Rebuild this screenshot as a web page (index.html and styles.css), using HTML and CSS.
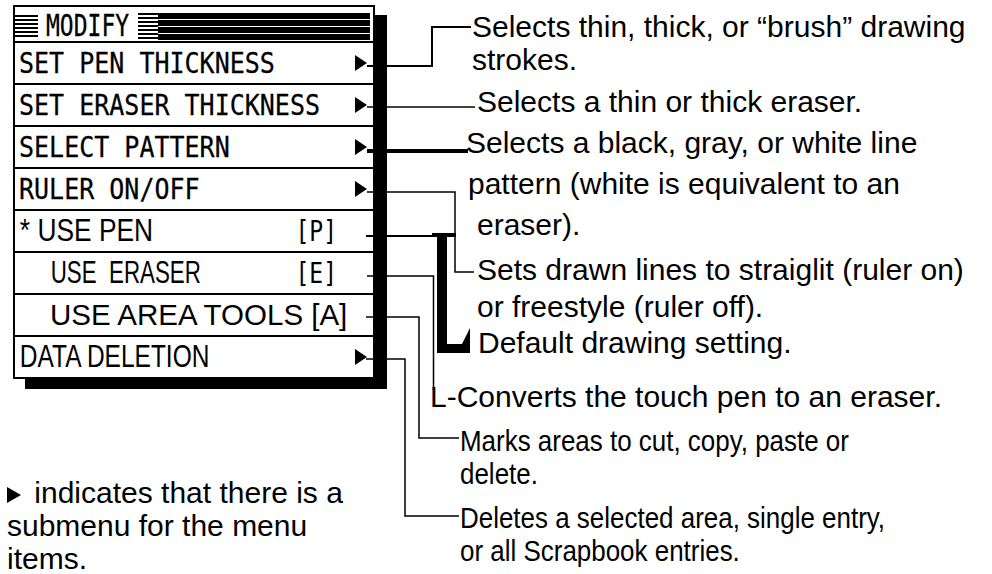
FILE: index.html
```html
<!DOCTYPE html>
<html lang="en">
<head>
<meta charset="UTF-8">
<title>MODIFY menu</title>
<link rel="stylesheet" href="styles.css">
</head>
<body>
<div class="page">
    <div class="left">
        <div class="menu">
            <div class="menu-title">
                <span class="grip"></span>
                <span class="lcd title-text">MODIFY</span>
                <span class="title-bars"></span>
            </div>
            <div class="menu-row"><span class="lcd">SET PEN THICKNESS</span><span class="arrow"></span></div>
            <div class="menu-row"><span class="lcd">SET ERASER THICKNESS</span><span class="arrow"></span></div>
            <div class="menu-row"><span class="lcd">SELECT PATTERN</span><span class="arrow"></span></div>
            <div class="menu-row"><span class="lcd">RULER ON/OFF</span><span class="arrow"></span></div>
            <div class="menu-row"><span class="plain">* USE PEN</span><span class="lcd key">[P]</span></div>
            <div class="menu-row sub"><span class="plain tight">USE&nbsp; ERASER</span><span class="lcd key">[E]</span></div>
            <div class="menu-row sub"><span class="wide">USE AREA TOOLS [A]</span></div>
            <div class="menu-row last"><span class="plain slim">DATA DELETION</span><span class="arrow"></span></div>
        </div>
        <p class="footnote"><span class="arrow inline"></span> indicates that there is a<br>submenu for the menu<br>items.</p>
    </div>

    <div class="notes">
        <p class="note n1">Selects thin, thick, or “brush” drawing<br>strokes.</p>
        <p class="note n2">Selects a thin or thick eraser.</p>
        <p class="note n3">
            <span class="ln">Selects a black, gray, or white line</span>
            <span class="ln l2">pattern (white is equivalent to an</span>
            <span class="ln l3">eraser).</span>
        </p>
        <p class="note n4">Sets drawn lines to straiglit (ruler on)<br>or freestyle (ruler off).</p>
        <p class="note n5">Default drawing setting.</p>
        <p class="note n6">L-Converts the touch pen to an eraser.</p>
        <p class="note n7 narrow">Marks areas to cut, copy, paste or<br>delete.</p>
        <p class="note n8 narrow">Deletes a selected area, single entry,<br>or all Scrapbook entries.</p>
    </div>

    <!-- leader lines from the menu to the notes -->
    <svg class="leaders" width="992" height="574" viewBox="0 0 992 574">
        <g fill="none" stroke="#000" stroke-width="2">
            <path d="M367 66H432V27H471"/>
            <path d="M367 107H475" stroke-width="1.5"/>
            <path d="M367 151H468" stroke-width="4"/>
            <path d="M367 192H455V272H474" stroke-width="1.5"/>
            <path d="M366 236H440" stroke-width="2"/>
            <path d="M367 276H433.5V390" stroke-width="1.5"/>
            <path d="M366 317H419V438H459" stroke-width="1.5"/>
            <path d="M366 359H405V516H459" stroke-width="1.5"/>
        </g>
        <path d="M432 233H456V237H447V344H462L470 328V353H437V237H432Z" fill="#000"/>
    </svg>
</div>
</body>
</html>
```

FILE: styles.css
```css
body {
    margin: 0;
    background: #fff;
    color: #000;
    font-family: "Liberation Sans", Arial, sans-serif;
}
.page {
    position: relative;
    display: flex;
    width: 992px;
    height: 574px;
    overflow: hidden;
}
.left {
    flex: none;
    width: 430px;
}

/* the menu box */
.menu {
    width: 362px;
    margin: 5px 0 0 13px;
    box-sizing: border-box;
    border: 2px solid #000;
    background: #fff;
    box-shadow: 12px 10px 0 #000;
}
.menu-title {
    display: flex;
    align-items: center;
    height: 36px;
    padding-top: 4px;
    box-sizing: border-box;
    border-bottom: 2px solid #000;
}
.grip {
    flex: none;
    width: 23px;
    height: 22px;
    background: repeating-linear-gradient(#000 0 2px, #fff 2px 4px);
}
.title-bars {
    flex: 1;
    height: 27px;
    margin: 0 3px 0 9px;
    background:
        repeating-linear-gradient(#000 0 2px, #fff 2px 4px) 0 0 / 20px 100% no-repeat,
        repeating-linear-gradient(#000 0 6px, #fff 6px 7px);
}
.menu-row {
    display: flex;
    align-items: center;
    height: 42px;
    padding: 0 6px 0 4px;
    box-sizing: border-box;
    border-bottom: 2px solid #000;
}
.menu-row.last {
    border-bottom: 0;
    height: 40px;
}
.menu-row.sub {
    padding-left: 35px;
}
.lcd {
    display: inline-block;
    font-family: "DejaVu Sans Mono", monospace;
    font-size: 25px;
    line-height: 29px;
    -webkit-text-stroke: 0.25px #000;
    transform: scaleY(1.15);
}
.title-text {
    margin-left: 8px;
    font-size: 23px;
    transform: scaleY(1.3);
}
.key {
    margin-left: auto;
    margin-right: 30px;
    font-size: 23px;
    -webkit-text-stroke: 0;
    transform: scaleY(1.25);
}
.plain {
    display: inline-block;
    font-size: 31px;
    padding-left: 1px;
    white-space: nowrap;
    transform: scaleX(0.85);
    transform-origin: 0 50%;
}
.plain.tight {
    transform: scaleX(0.72);
}
.plain.slim {
    transform: scaleX(0.79);
}
.wide {
    font-size: 29.5px;
}
.arrow {
    flex: none;
    margin-left: auto;
    width: 0;
    height: 0;
    border-left: 12px solid #000;
    border-top: 8px solid transparent;
    border-bottom: 8px solid transparent;
}
.arrow.inline {
    display: inline-block;
    margin: 0 5px 0 0;
    border-left-width: 14px;
}

.footnote {
    margin: 97px 0 0;
    padding-left: 7px;
    font-size: 30px;
    line-height: 33px;
}

/* notes on the right */
.notes {
    flex: 1;
    padding-top: 10px;
    font-size: 30px;
    line-height: 33px;
}
.note {
    margin: 0;
    white-space: nowrap;
}
.n1 { padding-left: 42px; }
.n2 { margin-top: 9px; padding-left: 47px; }
.n3 { margin-top: 4px; padding-left: 36px; line-height: 41px; }
.n3 .ln { display: block; }
.n3 .l2 { padding-left: 2px; }
.n3 .l3 { padding-left: 11px; }
.n4 { margin-top: 6px; padding-left: 47px; line-height: 37px; }
.n5 { margin-top: 1px; padding-left: 48px; }
.n6 { margin-top: 21px; }
.n7 { margin-top: 11px; padding-left: 30px; }
.n8 { margin-top: 11px; padding-left: 30px; }
.narrow {
    transform: scaleX(0.865);
    transform-origin: 30px 0;
}

.leaders {
    position: absolute;
    left: 0;
    top: 0;
    pointer-events: none;
}
```
